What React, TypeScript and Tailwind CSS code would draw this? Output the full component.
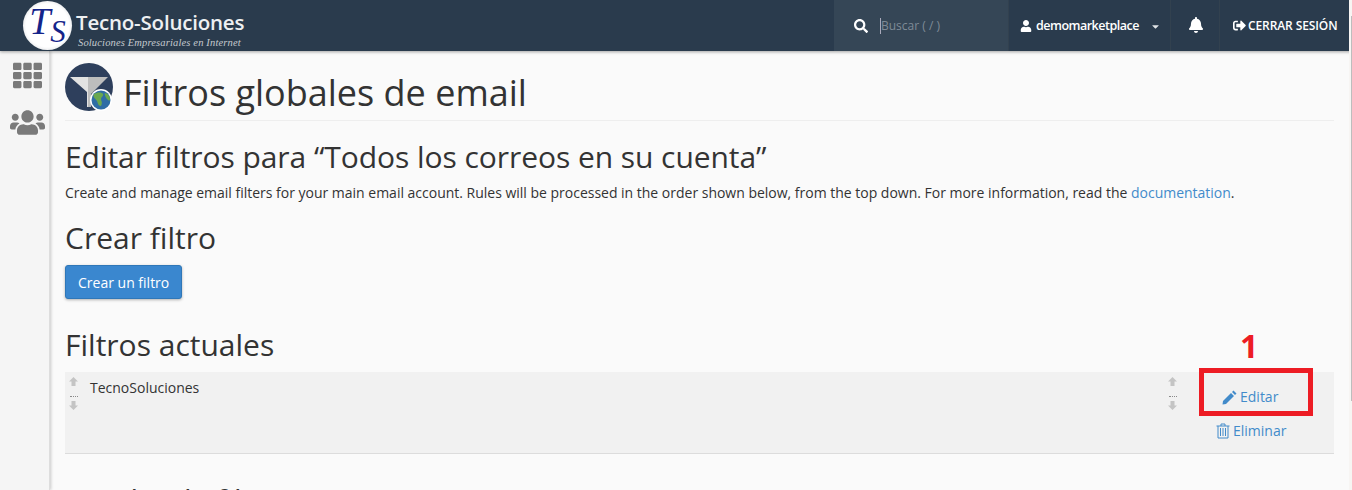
import { FaBell, FaCaretDown, FaSearch, FaSignOutAlt, FaTh, FaUser, FaUsers } from "react-icons/fa";

function Logo() {
  return (
    <div className="flex items-center ml-[23px] w-[811px]">
      <div className="w-[49px] h-[49px] rounded-full bg-[radial-gradient(circle,#ffffff_62%,#b9bdc2_100%)] flex items-center justify-center shrink-0 font-['Liberation_Serif',serif] italic text-[#14248a] leading-none">
        <span className="text-[38px] -mt-[9px]">T</span>
        <span className="text-[31px] mt-[12px]">S</span>
      </div>
      <div className="ml-[4px] mt-[9px] text-[#eef0f2]">
        <div className="text-[20.500px] leading-[24px] font-semibold tracking-[-0.2px] mt-[-2px]">Tecno-Soluciones</div>
        <div className="font-['Liberation_Serif',serif] italic text-[10.500px] leading-[12px] text-[#c5cacf] ml-[2px] mt-[3px] tracking-[0.15px]">Soluciones Empresariales en Internet</div>
      </div>
    </div>
  );
}

function FilterIcon() {
  return (
    <svg width="48" height="48" viewBox="0 0 48 48" className="shrink-0">
      <circle cx="24" cy="24" r="24" fill="#2e3f5c" />
      <path d="M5 14H23V44H22V29Z" fill="#e2e2e2" />
      <path d="M23 14H43L26 31V44H23Z" fill="#bdbdbd" />
      <circle cx="36" cy="37" r="11" fill="#fff" />
      <circle cx="36" cy="37" r="9.500" fill="#2f6ea5" />
      <path d="M29 31c3-2 8-2 9 0s-2 3-2 5 2 3 0 7c-3 0-3-3-4-5s-5-4-3-7Z" fill="#6aa84f" />
      <path d="M40 30c2 0 5 3 5 6s-2 1-3 0-3-5-2-6Z" fill="#6aa84f" />
    </svg>
  );
}

function Arrows() {
  return (
    <div className="flex flex-col items-center w-[9px] pt-[5px] text-[#c4c4c4]">
      <svg width="9" height="9" viewBox="0 0 9 9" fill="currentColor"><path d="M4.500 0 9 4.500H6.500V9H2.500V4.500H0Z" /></svg>
      <div className="w-[8px] mt-[10px] border-t border-dotted border-[#8a8a8a]" />
      <svg width="9" height="9" viewBox="0 0 9 9" fill="currentColor" className="mt-[4px]"><path d="M2.500 0H6.500V4.500H9L4.500 9 0 4.500H2.500Z" /></svg>
    </div>
  );
}

export default function App() {
  return (
    <div className="relative w-[1352px] h-[490px] overflow-hidden bg-[#fafafa] font-['Open_Sans',sans-serif] text-[#333]">
      {/* Top bar */}
      <header className="relative z-10 flex h-[51px] bg-[#2a3b4d] shadow-[0_1px_3px_rgba(0,0,0,0.35)]">
        <Logo />
        <div className="flex items-center w-[175px] h-full bg-[#354656] border-r border-[#32414f] pl-[20px]">
          <FaSearch size={14} className="text-white" />
          <div className="ml-[12px] mt-[1px] border-l border-[#aab] h-[16px] flex items-center text-[12px] text-[#7f8b96]">Buscar ( / )</div>
        </div>
        <div className="flex items-center w-[162px] h-full border-r border-[#32414f] pl-[11px] pt-[1px] text-white text-[12.500px] font-semibold tracking-[-0.5px]">
          <FaUser size={12} />
          <span className="ml-[4px]">demomarketplace</span>
          <FaCaretDown size={11} className="ml-[11px] text-[#dfe3e6]" />
        </div>
        <div className="flex items-center justify-center w-[49px] h-full border-r border-[#32414f] text-white pb-[2px] pl-[1px]">
          <FaBell size={16} />
        </div>
        <div className="flex items-center pl-[13px] text-white text-[12px] font-semibold tracking-[-0.1px]">
          <FaSignOutAlt size={13} />
          <span className="ml-[2px]">CERRAR SESIÓN</span>
        </div>
      </header>

      <div className="flex h-[439px]">
        {/* Sidebar */}
        <aside className="w-[50px] shrink-0 h-full bg-[#f5f5f5] border-r border-[#ddd] shadow-[1px_0_3px_rgba(0,0,0,0.2)] flex flex-col items-center text-[#7a7a7a]">
          <FaTh size={29} className="mt-[10px] ml-[6px]" />
          <FaUsers size={35} className="mt-[15px] ml-[6px]" />
        </aside>

        {/* Main */}
        <main className="flex-1 pl-[15px] pr-[18px] pt-[12px]">
          <div className="flex items-center h-[58px] pb-[9px] border-b border-[#eee]">
            <FilterIcon />
            <h1 className="ml-[10px] mt-[12px] text-[36px] leading-[44px] text-[#333]">Filtros globales de email</h1>
          </div>

          <h2 className="mt-[18px] text-[30px] leading-[36px] tracking-[-0.06px]">Editar filtros para “Todos los correos en su cuenta”</h2>
          <p className="mt-[8px] text-[14px] leading-[20px] tracking-[-0.01px] text-[#333]">
            Create and manage email filters for your main email account. Rules will be processed in the order shown below, from the top down. For more information, read the <span className="text-[#428bca]">documentation</span>.
          </p>

          <h2 className="mt-[17px] text-[30px] leading-[36px]">Crear filtro</h2>
          <button className="mt-[9px] h-[34px] px-[12px] rounded-[3px] bg-[#3a87cf] border border-[#2f77b8] shadow-[0_1px_3px_rgba(0,0,0,0.3)] text-white text-[14px] block">
            Crear un filtro
          </button>

          <h2 className="mt-[28px] text-[30px] leading-[36px]">Filtros actuales</h2>
          <div className="mt-[9px] flex h-[82px] bg-[#f1f1f1] border-b border-[#dcdcdc]">
            <div className="ml-[4px]"><Arrows /></div>
            <div className="ml-[12px] pt-[6px] text-[14px] leading-[20px] text-[#333] flex-1">TecnoSoluciones</div>
            <div className="mr-[157px]"><Arrows /></div>
            <div className="absolute left-[1216px] top-[387px] flex flex-col text-[14px] leading-[20px] text-[#428bca]">
              <a className="flex items-center ml-[6px]">
                <svg width="15" height="15" viewBox="0 0 15 15" fill="currentColor" className="mr-[3px]">
                  <path d="M11.500 0.500 14.500 3.500 13 5 10 2ZM9 3 12 6 4 14 0.500 14.500 1 11Z" />
                </svg>
                Editar
              </a>
              <a className="flex items-center mt-[14px]">
                <svg width="14" height="16" viewBox="0 0 14 16" fill="none" stroke="currentColor" className="mr-[3px]">
                  <path d="M0.500 3H13.500M5 3V1H9V3M2 3V15H12V3M4.500 5V13M7 5V13M9.500 5V13" />
                </svg>
                Eliminar
              </a>
            </div>
          </div>

          <h2 className="mt-[28px] text-[30px] leading-[36px]">Prueba de filtro</h2>
        </main>
      </div>

      {/* Red annotation */}
      <div className="absolute left-[1199px] top-[368px] w-[114px] h-[48px] border-[5px] border-[#ed1c24]" />
      <div className="absolute left-[1240px] top-[326px] text-[#ed1c24] text-[32px] leading-[40px] font-bold">1</div>

      {/* Scrollbar strip */}
      <div className="absolute z-20 right-0 top-0 bottom-0 w-[3px] bg-[#f7f5f3]">
        <div className="ml-[2px] mt-[16px] w-[1px] h-[385px] bg-[#bdbdbd]" />
      </div>
    </div>
  );
}
